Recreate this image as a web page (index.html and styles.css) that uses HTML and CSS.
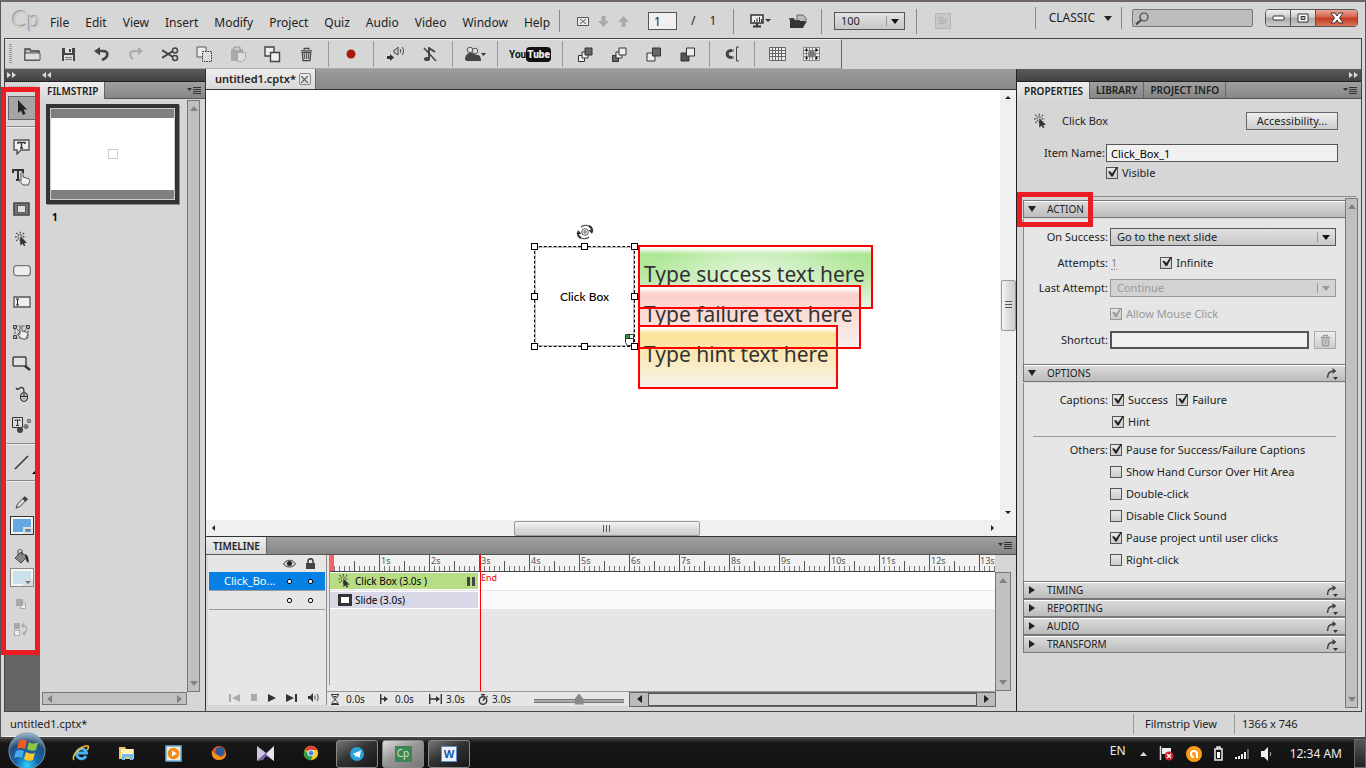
FILE: index.html
```html
<!DOCTYPE html>
<html lang="en">
<head>
<meta charset="utf-8">
<title>untitled1.cptx* - Captivate</title>
<link rel="stylesheet" href="styles.css">
</head>
<body>
<svg class="defs" aria-hidden="true">
  <symbol id="clickbox" viewBox="0 0 16 18"><path d="M6 0v4M6 9v3M0 6h4M8.500 6H12M1.500 1.500l3 3M10.500 1.500l-3 3M1.500 10.500l3-3" stroke="#444" stroke-width="1.400" fill="none" stroke-dasharray="2 1"/><path d="M6 5v11l2.600-2.400 1.600 3 1.700-1-1.600-2.700h3.400z" fill="#333"/></symbol>
  <symbol id="flyout" viewBox="0 0 14 9"><path d="M0 2h5L2.500 5z" fill="#333"/><path d="M6 1.500h8M6 3.500h8M6 5.500h8M6 7.500h8" stroke="#333"/></symbol>
  <symbol id="reset" viewBox="0 0 13 13"><path d="M1.500 11C1.500 6 4 4 8 4" fill="none" stroke="#444" stroke-width="1.600"/><path d="M6.500 1l4 3-4 3z" fill="#444"/><path d="M7 10h5l-2.500 3z" fill="#333"/></symbol>
  <symbol id="trash" viewBox="0 0 14 16"><path d="M4.500 3V1.500h5V3M1 4h12M2.500 6h9l-.8 8.500H3.300z" fill="none" stroke="currentColor" stroke-width="1.400"/><path d="M5 7v6M7 7v6M9 7v6" stroke="currentColor"/></symbol>
</svg>
<div class="app">
  <header class="topbar">
    <div class="logo">Cp</div>
    <nav class="menu"><a href="#">File</a><a href="#">Edit</a><a href="#">View</a><a href="#">Insert</a><a href="#">Modify</a><a href="#">Project</a><a href="#">Quiz</a><a href="#">Audio</a><a href="#">Video</a><a href="#">Window</a><a href="#">Help</a></nav>
    <div class="pager">
      <button aria-label="Mail"><svg width="12" height="9"><path d="M.5.500h11v8H.5zM3 2l6 5M9 2L3 7" fill="#eee" stroke="#555"/></svg></button>
      <button class="dim" aria-label="Next slide"><svg width="11" height="11"><path d="M3.500 0h4v5H11L5.500 11 0 5h3.500z"/></svg></button>
      <button class="dim" aria-label="Previous slide"><svg width="11" height="11"><path d="M3.500 11h4V6H11L5.500 0 0 6h3.500z"/></svg></button>
      <input class="page" value="1" aria-label="Slide number"><span>/</span><span>1</span>
    </div>
    <div class="views">
      <button aria-label="Preview"><svg width="21" height="14"><path d="M1 1h12v8H1z" fill="#eee" stroke="#333" stroke-width="1.500"/><path d="M4.500 8V6M7 8V4M9.500 8V3M11.500 8V5" stroke="#333"/><path d="M3 12.500h8M7 9v3" stroke="#333" stroke-width="2"/><path d="M15 5h6l-3 3z" fill="#333"/></svg></button>
      <button aria-label="Publish"><svg width="18" height="15"><path d="M8 1h6l3 3v5H8z" fill="#bbb" stroke="#666"/><path d="M0 4h5l1 2h5v1H1z" fill="#444"/><path d="M1 14V6h4l1 1h10l1 1-3 6z" fill="#333"/></svg></button>
    </div>
    <div class="zoom"><span class="select"><select aria-label="Zoom"><option>100</option></select></span></div>
    <button class="bridge" disabled>Br</button>
    <div class="workspace-switch"><button>CLASSIC <i class="tri"></i></button></div>
    <label class="search"><svg width="14" height="13"><circle cx="9" cy="5" r="4" fill="none" stroke="#444" stroke-width="1.200"/><path d="M6 8l-5 4.500" stroke="#444" stroke-width="2"/></svg><input type="search" aria-label="Search"></label>
    <div class="window-buttons">
      <button aria-label="Minimize"><svg width="13" height="6"><rect x="1" y="1" width="11" height="4" rx="1" fill="#fff" stroke="#333"/></svg></button><button aria-label="Restore"><svg width="12" height="10"><path d="M1 1h10v8H1z" fill="#fff" stroke="#333"/><path d="M4 3.500h4v3H4z" fill="#bbb" stroke="#333"/></svg></button><button class="close" aria-label="Close"><svg width="14" height="12"><path d="M1 1h4l2 3 2-3h4L9.500 6 13 11H9L7 8l-2 3H1l3.500-5z" fill="#fff" stroke="#433"/></svg></button>
    </div>
  </header>

  <div class="frame">
    <div class="toolbar">
      <span class="grip"></span>
      <button class="first" aria-label="Open"><svg width="17" height="14"><path d="M1 13V2h5l1 2h8v9z" fill="#bbb" stroke="#444" stroke-width="1.400"/><path d="M1 6h15v7H1z" fill="#ddd" stroke="#555"/></svg></button>
      <button aria-label="Save"><svg width="15" height="15"><path d="M1 1h13v13H1z" fill="#444"/><path d="M4 1h7v5H4z" fill="#ddd"/><path d="M8 2h2v3H8z" fill="#444"/><path d="M3 8h9v6H3z" fill="#ddd"/><path d="M4 10.500h7M4 12.500h7" stroke="#777"/></svg></button>
      <button aria-label="Undo"><svg width="16" height="14"><path d="M3 4h6c6 0 6 6-1 9" fill="none" stroke="#444" stroke-width="2.600"/><path d="M6 0v8.500L0 4z" fill="#444"/></svg></button>
      <button class="dim" aria-label="Redo"><svg width="16" height="14"><path d="M12 4H7C1 4 1 9 5 12" fill="none" stroke="#aaa" stroke-width="2"/><path d="M10 0v8l5-4z"/></svg></button>
      <button aria-label="Cut"><svg width="17" height="15"><path d="M0 3l11 7M0 11l11-7" stroke="#444" stroke-width="2"/><circle cx="13" cy="3.500" r="2.500" fill="none" stroke="#444" stroke-width="1.500"/><circle cx="13" cy="11" r="2.500" fill="none" stroke="#444" stroke-width="1.500"/></svg></button>
      <button aria-label="Copy"><svg width="17" height="17"><path d="M1 1h9v10H1z" fill="#eee" stroke="#555"/><path d="M6.500 5.500h9v10h-9z" fill="#ddd" stroke="#333" stroke-dasharray="1.500 1"/></svg></button>
      <button aria-label="Paste"><svg width="17" height="17"><path d="M1 3h12v12H1z" fill="#aaa"/><path d="M4 1h6v4H4z" fill="#ccc" stroke="#999"/><path d="M7.500 6.500h8v6l-3 3h-5z" fill="#ddd" stroke="#aaa"/></svg></button>
      <button aria-label="Duplicate"><svg width="17" height="17"><path d="M1 1h9v9H1z" fill="#eee" stroke="#444" stroke-width="1.400"/><path d="M6.500 6.500h9v9h-9z" fill="#eee" stroke="#444" stroke-width="1.400"/></svg></button>
      <button class="grey" aria-label="Delete"><svg width="13" height="15"><use href="#trash"/></svg></button>
      <span class="sep"></span>
      <button aria-label="Record"><svg width="10" height="10"><circle cx="5" cy="5" r="4.500" fill="#a81a0c"/></svg></button>
      <span class="sep"></span>
      <button aria-label="Audio"><svg width="18" height="16"><path d="M0 10h3V8l4 3.500L3 15v-2H0z" fill="#333"/><path d="M7 4h1l3-3v8L8 7H7z" fill="#ccc" stroke="#444"/><path d="M13 3c1 1 1 3 0 4M15 1c2 2 2 6 0 8" fill="none" stroke="#444"/></svg></button>
      <button aria-label="Mute music"><svg width="15" height="15"><path d="M6 12V1l6 4" fill="none" stroke="#444" stroke-width="2"/><ellipse cx="4" cy="12" rx="3" ry="2" fill="#444"/><path d="M1 1l12 13" stroke="#444" stroke-width="1.500"/></svg></button>
      <span class="sep"></span>
      <button aria-label="Share"><svg width="22" height="16"><path d="M1 14c0-4 2-7 5-7 4 0 5 2 8 2 2 0 3 3 3 6H3z" fill="#444"/><circle cx="6" cy="4" r="2.800" fill="#ddd" stroke="#555"/><circle cx="11" cy="5" r="2.800" fill="#ddd" stroke="#555"/><path d="M17 7h5l-2.500 3z" fill="#333"/></svg></button>
      <span class="sep"></span>
      <button class="youtube" aria-label="YouTube"><span>You</span><b>Tube</b></button>
      <span class="sep"></span>
      <button aria-label="Bring to front"><svg width="15" height="15"><path d="M.5 8.500h6v6h-6z" fill="#eee" stroke="#333"/><path d="M4 5h6v6H4z" fill="#eee" stroke="#333"/><path d="M7 1h7v7H7z" fill="#666" stroke="#333"/></svg></button>
      <button aria-label="Bring forward"><svg width="15" height="15"><path d="M.5 8.500h6v6h-6z" fill="#666" stroke="#333"/><path d="M4 5h6v6H4z" fill="#eee" stroke="#333"/><path d="M7 1h7v7H7z" fill="#eee" stroke="#333"/></svg></button>
      <button aria-label="Send backward"><svg width="15" height="15"><path d="M1 6h8v8H1z" fill="#eee" stroke="#333"/><path d="M6.500 1h8v8h-8z" fill="#666" stroke="#333"/></svg></button>
      <button aria-label="Send to back"><svg width="15" height="15"><path d="M1 6h8v8H1z" fill="#555" stroke="#333"/><path d="M6.500 1h8v8h-8z" fill="#eee" stroke="#333"/></svg></button>
      <span class="sep"></span>
      <button aria-label="Snap"><svg width="15" height="16"><path d="M9 4.500H6C1 5 1 11 6 11.500h3" fill="none" stroke="#444" stroke-width="3"/><path d="M8 3v3M8 10v3" stroke="#ddd"/><path d="M14 1h-2.500v14H14" fill="none" stroke="#444"/></svg></button>
      <span class="sep"></span>
      <button aria-label="Show grid"><svg width="17" height="14"><path d="M.5.500h16v13H.5zM3.500 0v14M6.500 0v14M9.500 0v14M12.500 0v14M0 3.500h17M0 6.500h17M0 9.500h17" fill="#eee" stroke="#666"/></svg></button>
      <button aria-label="Snap to grid"><svg width="17" height="14"><path d="M.5.500h16v13H.5zM3.500 0v14M6.500 0v14M9.500 0v14M12.500 0v14M0 3.500h17M0 6.500h17M0 9.500h17" fill="#eee" stroke="#888"/><circle cx="8.500" cy="7" r="3.500" fill="#777"/><path d="M2 3h3M3.500 1.500v3M12 3h3M13.500 1.500v3M2 11h3M3.500 9.500v3M12 11h3M13.500 9.500v3" stroke="#111"/></svg></button>
    </div>

    <div class="main">
      <aside class="tools">
        <div class="dock"><svg width="9" height="6"><path d="M0 0l4 3-4 3zM5 0l4 3-4 3z"/></svg></div>
        <div class="tool-list">
          <span class="dots"></span>
          <button class="selected" aria-label="Selection"><svg width="10" height="16"><path d="M1 0v13l3-2.500L6 15l2.500-1.200L6.500 9.500H10z" fill="#222"/></svg></button>
          <hr>
          <button aria-label="Text caption"><svg width="17" height="16"><path d="M1 1h15v10H8l-4 4v-4H1z" fill="#eee" stroke="#555" stroke-width="1.400"/><path d="M5 5V3.500h7V5M8.500 3.500V9M7 9h3" fill="none" stroke="#333" stroke-width="1.400"/></svg></button>
          <button aria-label="Rollover caption"><svg width="19" height="17"><path d="M1 4V1h10v3M6 1v10M4 11h4" fill="none" stroke="#333" stroke-width="2"/><path d="M9 12V4.500c0-1.500 2-1.500 2 0V8l5 1.500c2 .5 2 1.500 1.500 3L16.500 16H11L7 11.500c-.5-1 1-1.500 2 .5z" fill="#eee" stroke="#555"/></svg></button>
          <button aria-label="Highlight box"><svg width="17" height="14"><path d="M1 1h15v12H1z" fill="#777" stroke="#444" stroke-width="1.500"/><path d="M4.500 3.500h8v7h-8z" fill="#ddd" stroke="#111" stroke-dasharray="1 1"/></svg></button>
          <button aria-label="Click box"><svg width="14" height="17"><use href="#clickbox"/></svg></button>
          <button aria-label="Button"><svg width="18" height="12"><rect x=".7" y=".7" width="16.600" height="10" rx="3" fill="#eee" stroke="#777" stroke-width="1.300"/></svg></button>
          <button aria-label="Text entry box"><svg width="18" height="12"><path d="M1 1h16v10H1z" fill="#eee" stroke="#555" stroke-width="1.300"/><path d="M3 3h3M4.500 3v6M3 9h3" stroke="#222"/></svg></button>
          <button aria-label="Rollover slidelet"><svg width="18" height="17"><path d="M2 2h13v12H2z" fill="none" stroke="#555" stroke-dasharray="2.500 1"/><path d="M.5 1.500h3v3h-3zM13.500 1.500h3v3h-3zM.5 11.500h3v3h-3z" fill="#aaa" stroke="#444"/><path d="M4 5l3 3M13 5l-3 3M4 11l3-3" stroke="#666"/><path d="M7 10V4c0-1.500 2-1.500 2 0v3l4 1c2 .5 2 1.500 1.500 3L13 15H9l-4-4c-.500-1 1-1.500 2-.500z" fill="#eee" stroke="#555"/></svg></button>
          <button aria-label="Zoom area"><svg width="19" height="15"><rect x="1" y="1" width="13" height="9" rx="1" fill="#e2e2e2" stroke="#444" stroke-width="1.500"/><path d="M13 10l5 4" stroke="#333" stroke-width="2.500"/></svg></button>
          <button aria-label="Mouse"><svg width="14" height="17"><path d="M1 2c3 4 4-3 7 0 1 1 1 3 1 4" fill="none" stroke="#333" stroke-width="1.300"/><rect x="5.500" y="6.500" width="7" height="9" rx="3.500" fill="#bbb" stroke="#333"/><path d="M5 10.500h8M9 7v3" stroke="#333"/></svg></button>
          <button aria-label="Text animation"><svg width="20" height="17"><path d="M.5.500h10v10H.5z" fill="#ddd" stroke="#333"/><path d="M3 4V3h5v1M5.500 3v5.500M4 8.500h3" fill="none" stroke="#333"/><circle cx="8" cy="13" r="3" fill="#444"/><circle cx="14" cy="9.500" r="2.500" fill="#777"/><path d="M15.500 2.500h3v3h-3z" fill="#999" stroke="#777"/></svg></button>
          <hr class="tight">
          <button class="line" aria-label="Line"><svg width="15" height="15"><path d="M1 14L14 1" stroke="#333" stroke-width="1.500"/></svg><svg class="more" width="4" height="4"><path d="M4 0v4H0z"/></svg></button>
          <hr class="tight">
          <button class="pencil" aria-label="Stroke colour"><svg width="13" height="13"><path d="M1 12l1.500-4L8 2.500l2.500 2.500L5 10.500z" fill="#ddd" stroke="#444"/><path d="M8 2.500L10 .7l2.500 2.500-2 2z" fill="#444" stroke="#333"/></svg></button>
          <button class="swatch" aria-label="Stroke swatch"><i class="tri"></i></button>
          <button class="bucket" aria-label="Fill colour"><svg width="15" height="15"><path d="M1 9l6-6 6 5-6 6z" fill="#888" stroke="#444"/><path d="M4 7V1.500C5-.5 8 0 8 2v4" fill="none" stroke="#444"/><path d="M11 5c3 1 4 5 3.500 9l-2-2z" fill="#222"/></svg></button>
          <button class="swatch pale" aria-label="Fill swatch"><i class="tri"></i></button>
          <button class="small" disabled aria-label="Default colours"><svg width="11" height="11"><path d="M4.500 4.500h5v5h-5z" fill="#eee" stroke="#aaa"/><path d="M0 0h7v7H0z" fill="#a8a8a8"/></svg></button>
          <button class="small" disabled aria-label="Swap colours"><svg width="15" height="13"><path d="M0 0h6v6H0z" fill="#a8a8a8"/><path d="M.5 7.500h5v5h-5z" fill="#eee" stroke="#aaa"/><path d="M8 2.500c6-1 6 8 1 8M10 .5l-2 2 2 2M11 8.500l-2 2 2 2" fill="none" stroke="#aaa" stroke-width="1.400"/></svg></button>
        </div>
      </aside>

      <aside class="filmstrip">
        <div class="dock"><svg width="9" height="6"><path d="M4 0L0 3l4 3zM9 0L5 3l4 3z"/></svg></div>
        <div class="tabs"><button class="on">FILMSTRIP</button><span class="fly"><svg width="14" height="9"><use href="#flyout"/></svg></span></div>
        <div class="film-body">
          <div class="slides"><div class="thumb"><div class="thumb-page"><i></i></div></div><b>1</b></div>
          <div class="vbar"><i class="tri up"></i><i class="tri"></i></div>
          <div class="hbar"><i class="tri left"></i><i class="tri right"></i></div>
        </div>
      </aside>

      <section class="center">
        <div class="doc-tabs"><div class="doc-tab"><b>untitled1.cptx*</b><button aria-label="Close document"><svg width="7" height="7"><path d="M0 0l7 7M7 0L0 7" stroke="#555" stroke-width="1.200"/></svg></button></div></div>
        <div class="editor">
          <div class="stage">
            <svg class="rotate" width="18" height="16"><path d="M5 3c2-2 6-2 8-1M13 13c-2 2-6 2-8 1" fill="none" stroke="#555" stroke-width="1.300"/><path d="M13 2c2 1 3 3 3 4M5 14c-2-1-3-3-3-4" fill="none" stroke="#333" stroke-width="2"/><path d="M12.500 6h5L16 10zM5.500 10h-5L2 6z" fill="#333"/><circle cx="9" cy="8" r="3.300" fill="#fff" stroke="#555"/><circle cx="9" cy="8" r="1.200" fill="none" stroke="#555"/></svg>
            <div class="click-box"><span>Click Box</span>
              <i class="h nw"></i><i class="h n"></i><i class="h ne"></i><i class="h w"></i><i class="h e"></i><i class="h sw"></i><i class="h s"></i><i class="h se"></i>
              <svg class="mouse" width="9" height="12"><path d="M.5.500h8v8l-2 3h-4l-2-3z" fill="#fff" stroke="#333"/><path d="M1 1h3v3H1z" fill="#2c9a3a"/><path d="M0 4.500h9M4.500 0v4" stroke="#333"/></svg>
            </div>
            <div class="caption success">Type success text here</div>
            <div class="caption failure">Type failure text here</div>
            <div class="caption hint">Type hint text here</div>
          </div>
          <div class="win-v"><i class="tri up"></i><span class="thumb-v"></span><i class="tri"></i></div>
          <div class="win-h"><i class="tri left"></i><span class="thumb-h"></span><i class="tri right"></i></div>
        </div>
        <div class="timeline">
          <div class="tabs"><button class="on">TIMELINE</button><span class="fly"><svg width="14" height="9"><use href="#flyout"/></svg></span></div>
          <div class="tl-body">
            <div class="layers">
              <div class="layer head"><svg width="13" height="9"><path d="M.5 5C3 0 10 0 12.500 5 10 9 3 9 .5 5z" fill="#ccc" stroke="#444"/><circle cx="6.500" cy="4.500" r="2.500" fill="#222"/></svg><svg width="9" height="11"><path d="M2 5V3c0-3 5-3 5 0v2" fill="none" stroke="#333" stroke-width="1.400"/><path d="M0 5h9v6H0z" fill="#444"/></svg></div>
              <div class="layer active"><span>Click_Bo...</span><i></i><i></i></div>
              <div class="layer"><i></i><i></i></div>
              <div class="play">
                <button class="dim" aria-label="First"><svg width="11" height="8"><path d="M0 0h2v8H0zM11 0v8L3 4z"/></svg></button>
                <button class="dim" aria-label="Stop"><svg width="6" height="7"><path d="M0 0h6v7H0z"/></svg></button>
                <button aria-label="Play"><svg width="8" height="8"><path d="M0 0l8 4-8 4z"/></svg></button>
                <button aria-label="Last"><svg width="11" height="8"><path d="M0 0l8 4-8 4zM9 0h2v8H9z"/></svg></button>
                <button aria-label="Sound"><svg width="11" height="9"><path d="M0 3h2l3-3v9L2 6H0z"/><path d="M7 2.500v4M9 1c1.500 2 1.500 5 0 7" fill="none" stroke="#444"/></svg></button>
              </div>
            </div>
            <div class="tracks">
              <div class="ruler"><span></span><span>1s</span><span>2s</span><span>3s</span><span>4s</span><span>5s</span><span>6s</span><span>7s</span><span>8s</span><span>9s</span><span>10s</span><span>11s</span><span>12s</span><span class="last">13s</span></div>
              <div class="track"><div class="clip green"><svg width="13" height="15"><use href="#clickbox"/></svg><span>Click Box (3.0s )</span><em></em></div><small>End</small></div>
              <div class="track second"><div class="clip lilac"><svg width="14" height="12"><path d="M1.500 1.500h11v9h-11z" fill="#fff" stroke="#333" stroke-width="3"/></svg><span>Slide (3.0s)</span></div></div>
              <div class="line-start"></div><div class="line-end"></div>
            </div>
            <div class="vbar"><i class="tri up"></i><i class="tri"></i></div>
            <div class="tl-foot">
              <span><svg width="8" height="11"><path d="M0 .5h8M0 10.500h8M1 1c0 4 6 5 6 9M7 1c0 4-6 5-6 9" fill="none" stroke="#333"/><path d="M2 9h4v1H2zM2 2h4L4 4z" fill="#333"/></svg>0.0s</span>
              <span><svg width="8" height="10"><path d="M.7 0v10M1 5h4" stroke="#333" stroke-width="1.400"/><path d="M4 2l4 3-4 3z"/></svg>0.0s</span>
              <span class="wide"><svg width="13" height="10"><path d="M.7 0v10M12.300 0v10M1 5h8" stroke="#333" stroke-width="1.400"/><path d="M7 2l4 3-4 3z"/></svg>3.0s</span>
              <span class="wide"><svg width="10" height="11"><circle cx="5" cy="6.500" r="3.800" fill="#ddd" stroke="#333" stroke-width="1.400"/><path d="M3 .7h4M5 1v2M8.500 2l1 1M5 6.500L7 4" stroke="#333" stroke-width="1.300"/></svg>3.0s</span>
              <input type="range" min="0" max="100" value="50" aria-label="Timeline zoom">
              <div class="tl-scroll"><button aria-label="Scroll left"><i class="tri left"></i></button><span></span><button aria-label="Scroll right"><i class="tri right"></i></button></div>
            </div>
          </div>
        </div>
      </section>

      <aside class="props">
        <div class="dock end"><svg width="9" height="6"><path d="M0 0l4 3-4 3zM5 0l4 3-4 3z"/></svg></div>
        <div class="tabs"><button class="on">PROPERTIES</button><button>LIBRARY</button><button>PROJECT INFO</button><span class="fly"><svg width="14" height="9"><use href="#flyout"/></svg></span></div>
        <div class="item">
          <div class="item-top"><svg width="14" height="17"><use href="#clickbox"/></svg><span>Click Box</span><button class="btn">Accessibility...</button></div>
          <div class="item-name"><label for="nm">Item Name:</label><input id="nm" value="Click_Box_1"></div>
          <label class="check vis"><input type="checkbox" checked>Visible</label>
        </div>
        <div class="groups">
          <div class="acc">
            <div class="acc-head"><i class="tri"></i><span>ACTION</span><div class="mark"></div></div>
            <div class="acc-body action">
              <label for="os">On Success:</label><span class="select"><select id="os"><option>Go to the next slide</option></select></span>
              <span class="lab">Attempts:</span><div class="row"><a class="num" href="#">1</a><label class="check"><input type="checkbox" checked>Infinite</label></div>
              <label for="la">Last Attempt:</label><span class="select off"><select id="la" disabled><option>Continue</option></select></span>
              <span></span><label class="check off"><input type="checkbox" checked disabled>Allow Mouse Click</label>
              <label for="sc">Shortcut:</label><div class="row sc"><input id="sc"><button class="btn" disabled aria-label="Clear shortcut"><svg width="11" height="13"><use href="#trash"/></svg></button></div>
            </div>
            <div class="acc-head"><i class="tri"></i><span>OPTIONS</span><svg width="13" height="13"><use href="#reset"/></svg></div>
            <div class="acc-body options">
              <span class="lab">Captions:</span><div class="row caps"><label class="check"><input type="checkbox" checked>Success</label><label class="check"><input type="checkbox" checked>Failure</label></div>
              <span></span><div class="row caps"><label class="check"><input type="checkbox" checked>Hint</label></div>
              <hr>
              <span class="lab">Others:</span><label class="check"><input type="checkbox" checked>Pause for Success/Failure Captions</label>
              <span></span><label class="check"><input type="checkbox">Show Hand Cursor Over Hit Area</label>
              <span></span><label class="check"><input type="checkbox">Double-click</label>
              <span></span><label class="check"><input type="checkbox">Disable Click Sound</label>
              <span></span><label class="check"><input type="checkbox" checked>Pause project until user clicks</label>
              <span></span><label class="check"><input type="checkbox">Right-click</label>
            </div>
            <div class="acc-head shut"><i class="tri right"></i><span>TIMING</span><svg width="13" height="13"><use href="#reset"/></svg></div>
            <div class="acc-head shut"><i class="tri right"></i><span>REPORTING</span><svg width="13" height="13"><use href="#reset"/></svg></div>
            <div class="acc-head shut"><i class="tri right"></i><span>AUDIO</span><svg width="13" height="13"><use href="#reset"/></svg></div>
            <div class="acc-head shut"><i class="tri right"></i><span>TRANSFORM</span><svg width="13" height="13"><use href="#reset"/></svg></div>
          </div>
          <div class="vbar"><i class="tri up"></i><i class="tri"></i></div>
        </div>
      </aside>
    </div>
  </div>
  <footer class="status"><span>untitled1.cptx*</span><span class="cell view">Filmstrip View</span><span class="cell size">1366 x 746</span></footer>
</div>

<div class="taskbar">
  <button class="orb" aria-label="Start"><svg width="38" height="36" viewBox="0 0 38 36"><defs><radialGradient id="orb" cx=".5" cy=".9" r=".9"><stop offset="0" stop-color="#2fd0ff"/><stop offset=".35" stop-color="#1467ad"/><stop offset=".7" stop-color="#25507c"/><stop offset="1" stop-color="#a5bccb"/></radialGradient></defs><circle cx="19" cy="19" r="18" fill="url(#orb)" stroke="#7f99aa"/><path d="M11 9q4-3 8 0l-2 8q-4-2-8 0z" fill="#ee5a24"/><path d="M21 10q4 3 9 0l-2 8q-5 2-9-1z" fill="#8cc63f"/><path d="M8 19q4-2 8 0l-2 7q-4-2-8 0z" fill="#4aa9ea"/><path d="M18 20q5 3 9 1l-2 7q-5 2-9-1z" fill="#ffc72c"/></svg></button>
  <button aria-label="Internet Explorer"><svg width="18" height="18"><path d="M14 12A5 5 0 1 1 14.500 9H5" fill="none" stroke="#4db4f2" stroke-width="3"/><path d="M2 16C-1 12 9 1 16 2c1 1 0 3-1 4" fill="none" stroke="#f6bf2c" stroke-width="1.500"/></svg></button>
  <button aria-label="Explorer"><svg width="17" height="16"><path d="M0 2h6l1 2h8v10H0z" fill="#e8c76a"/><path d="M2 4h12v8H2z" fill="#fff0b5"/><path d="M3 15V9h11v6h-3v-3H6v3z" fill="#71bdeb"/></svg></button>
  <button aria-label="Media player"><svg width="17" height="17"><path d="M1 1h15v15H1z" fill="#f7e9d2" stroke="#65aee0" stroke-width="1.500"/><circle cx="8.500" cy="8.500" r="5.800" fill="#f18a17"/><path d="M7 5.500l5 3-5 3z" fill="#fff"/></svg></button>
  <button aria-label="Firefox"><svg width="16" height="16"><circle cx="8" cy="8" r="7" fill="#e2581c"/><circle cx="9" cy="6.500" r="4.500" fill="#275a9b"/><path d="M1 5c2 5 5 4 8 7 3 1 5-2 6-5 1 5-3 8-7 8C2 15 0 10 1 5z" fill="#f7941d"/></svg></button>
  <button aria-label="KMPlayer"><svg width="17" height="15"><path d="M0 0l9 7-9 8z" fill="#cfc4e4"/><path d="M17 0L0 15l6-1 3-4 8 5z" fill="#8166ae"/><path d="M17 0v15L9 8z" fill="#e8e4ef"/></svg></button>
  <button aria-label="Chrome"><svg width="16" height="16"><circle cx="8" cy="8" r="7.200" fill="#f7ca2c"/><path d="M8 8L1.800 4.400A7.200 7.200 0 0 1 14.500 5H8z" fill="#dd4435"/><path d="M8 15.200A7.200 7.200 0 0 1 1.800 4.400L5 9.500 9.500 11z" fill="#2f9e4d"/><circle cx="8" cy="8" r="3.300" fill="#fff"/><circle cx="8" cy="8" r="2.500" fill="#4486dd"/></svg></button>
  <button class="run" aria-label="Telegram"><svg width="14" height="14"><circle cx="7" cy="7" r="7" fill="#2ba0da"/><path d="M2.500 7L11 3.500 9.500 11 6.500 9 5.500 10.500 5 8z" fill="#fff"/></svg></button>
  <button class="run current" aria-label="Captivate"><span class="cp">Cp</span></button>
  <button class="run" aria-label="Word"><span class="word">W</span></button>
  <div class="tray">
    <span class="lang">EN</span>
    <svg width="7" height="4"><path d="M0 4l3.500-4L7 4z" fill="#ddd"/></svg>
    <svg width="15" height="15"><path d="M1.500 0v14" stroke="#ddd" stroke-width="1.500"/><path d="M3 2h9v6H3z" fill="#eee"/><circle cx="10" cy="10" r="4.500" fill="#c9252b"/><path d="M8 8l4 4M12 8l-4 4" stroke="#fff" stroke-width="1.400"/></svg>
    <svg width="16" height="16"><circle cx="8" cy="8" r="8" fill="#fb9a16"/><path d="M11 12V8A3 3 0 1 0 8 11" fill="none" stroke="#fff" stroke-width="2"/></svg>
    <svg width="9" height="15"><path d="M1 3h7v11H1zM3 1h3v2H3z" fill="#111" stroke="#eee" stroke-width="1.500"/><path d="M3 6h3v6H3z" fill="#fff"/></svg>
    <svg width="14" height="10"><path d="M0 8h2v2H0zM3 7h2v3H3zM6 5h2v5H6zM9 3h2v7H9z" fill="#eee"/><path d="M12 0h2v10h-2z" fill="#666"/></svg>
    <svg width="12" height="14"><path d="M0 4h3l4-4v14l-4-4H0z" fill="#eee"/><path d="M9 5c1 1 1 3 0 4" fill="none" stroke="#aaa"/></svg>
    <time>12:34 AM</time>
    <button class="desktop" aria-label="Show desktop"></button>
  </div>
</div>
<div class="mark-tools"></div>
</body>
</html>
```

FILE: styles.css
```css
*{box-sizing:border-box}
body{margin:0;min-height:100vh;display:flex;flex-direction:column;position:relative;background:#111;color:#222;font:11px/14px "Noto Sans","Open Sans",sans-serif}
button,input,select{font:inherit;color:inherit;margin:0;padding:0;border:0;background:none;border-radius:0;min-width:0}
button{display:flex;align-items:center;justify-content:center}
a{color:inherit;text-decoration:none}
svg{display:block;flex:none}
.defs{position:absolute;width:0;height:0}
.dim svg{fill:#aaa}
.tri{width:0;height:0;flex:none;border:4px solid transparent;border-top:5px solid #222;border-bottom:0}
.tri.up{border:4px solid transparent;border-bottom:5px solid #222;border-top:0}
.tri.left{border:4px solid transparent;border-right:5px solid #222;border-left:0}
.tri.right{border:4px solid transparent;border-left:5px solid #222;border-right:0}

/* Title and menu bar */
.app{flex:1;display:flex;flex-direction:column;background:#d6d6d6;border-top:2px solid #6d6567;border-left:1px solid #555;border-right:1px solid #555;border-bottom:2px solid #444;padding:0 3px}
.topbar{height:36px;display:flex;align-items:center;font-size:12px;padding:2px 4px 0 8px}
.logo{width:38px;font:23px/26px Lato,sans-serif;color:#c9c9c9;text-shadow:-1px -1px #999;padding-bottom:4px}
.menu{width:509px;display:flex;gap:16px;padding-top:4px}
.pager{display:flex;align-items:center;border-left:1px solid #888;height:22px;padding-left:17px;gap:9px;width:174px}
.pager button,.pager input{flex:none}
.pager input{margin-left:10px;width:29px;height:18px;border:1px solid #555;background:#f0f0f0;padding-left:5px}
.pager span{padding-left:5px}
.views,.zoom{display:flex;align-items:center;border-left:1px solid #888;height:25px}
.views{width:88px;padding-left:16px;gap:18px}
.zoom{width:96px;padding-left:12px;border-right:1px solid #888}
.zoom .select{width:71px;font-size:11px}
.bridge{width:16px;height:16px;margin-left:18px;border:1px solid #b5b5b5;background:#c8c8c8;color:#aaa;font-size:9px}
.workspace-switch{margin-left:auto;height:22px;display:flex;border-left:1px solid #888;border-right:1px solid #888;padding:0 9px 0 13px}
.workspace-switch button{gap:9px}
.workspace-switch,.search,.window-buttons{margin-bottom:6px}
.search{display:flex;align-items:center;width:121px;height:18px;margin-left:10px;border:1px solid #777;background:#bdbdbd;border-radius:2px;padding-left:2px}
.search input{width:100px}
.window-buttons{display:flex;margin-left:12px;border:1px solid #555;border-radius:4px;height:18px;overflow:hidden}
.window-buttons button{width:25px;border-right:1px solid #555;background:linear-gradient(#eee,#ccc 45%,#a9a9a9 50%,#ccc)}
.window-buttons .close{width:41px;border:0;background:linear-gradient(#e8a598,#d8614a 45%,#c03a20 50%,#d8755a)}

/* Toolbar */
.frame{flex:1;display:flex;flex-direction:column;border:1px solid #444}
.toolbar{height:30px;width:837px;display:flex;align-items:center;border-right:1px solid #666;border-bottom:1px solid #aaa;border-top:1px solid #eee}
.toolbar button{width:34px;height:28px}
.toolbar .first{width:37px}
.toolbar .grey{color:#444}
.grip{width:3px;height:20px;margin:0 2px 0 4px;background:repeating-linear-gradient(#999 0 1px,transparent 1px 2px)}
.sep{width:1px;height:26px;background:#999;margin:0 5px}
.toolbar .youtube{width:54px;font:bold 10px/15px Roboto,"Liberation Sans",sans-serif;color:#111}
.youtube b{background:#111;color:#eee;border-radius:4px;padding:0 1px}

/* Docked panels */
.main{flex:1;display:grid;grid-template-columns:35px 166px minmax(0,1fr) 344px}
.dock{height:13px;background:linear-gradient(#5c5c5c,#424242);border-bottom:1px solid #222;display:flex;align-items:center;padding-left:2px}
.dock svg{fill:#ddd}
.dock.end{justify-content:flex-end;padding-right:3px}
.tools{background:#646464}
.tool-list{background:#d6d6d6;height:572px;display:flex;flex-direction:column;align-items:center;padding-right:2px}
.tool-list button{width:100%;height:31px;flex:none}
.dots{width:25px;height:2px;margin:4px 0 8px;background:repeating-linear-gradient(90deg,#999 0 1px,transparent 1px 2px)}
.tool-list .selected{height:24px;width:28px;background:#a5a5a5;border:1px solid #666}
.tool-list hr{width:29px;border:0;border-top:1px solid #888;border-bottom:1px solid #eee;margin:6px 0 3px;flex:none}
.tool-list hr.tight{margin:2px 0 2px}
.tool-list .line{position:relative}
.more{position:absolute;right:2px;bottom:4px}
.tool-list .pencil{height:32px;padding-top:5px}
.tool-list .bucket{height:33px;padding-top:9px}
.tool-list .swatch{width:24px;height:19px;border:1px solid #333;background:#64a8e2;box-shadow:inset 0 0 0 2px #f4f4f4;align-items:flex-end;justify-content:flex-end;padding:2px}
.swatch .tri{border-top-color:#777;border-width:3px 3px 0;outline:2px solid #ddd}
.tool-list .swatch.pale{background:#c9e1ea;border-color:#888;margin-bottom:5px}
.tool-list .small{height:25px}

.filmstrip{display:flex;flex-direction:column;border-right:1px solid #333}
.tabs{display:flex;height:17px;background:linear-gradient(#a0a0a0,#868686);border-bottom:1px solid #555;font-weight:600;font-size:10px}
.tabs button{padding:0 6px;border-right:1px solid #666;font-weight:600}
.tabs .on{background:linear-gradient(#eee,#d8d8d8);height:17px;padding:0 6px 0 7px}
.fly{margin:4px 4px 0 auto}
.film-body{flex:1;display:grid;grid-template:1fr 13px/145px 13px;padding:1px 0 6px 2px;background:#d6d6d6}
.slides{padding:4px 0 0 4px}
.slides b{display:block;padding:6px;font-size:10px;color:#000}
.thumb{width:133px;height:100px;background:#808080;border:4px solid #333;box-shadow:inset 0 0 0 1px #ccc,1px 1px #888;padding:10px 1px}
.thumb-page{height:100%;background:#fff;display:flex;align-items:center;justify-content:center}
.thumb-page i{width:10px;height:10px;border:1px solid #ccc}
.vbar,.hbar{background:#c0c0c0;border:1px solid #777;display:flex;align-items:center;justify-content:space-between}
.vbar{flex-direction:column;padding:5px 0}
.hbar{padding:0 4px}
.vbar .tri,.hbar .tri{opacity:.4}

/* Document */
.center{display:flex;flex-direction:column;min-width:0;border-right:1px solid #222}
.doc-tabs{height:21px;background:linear-gradient(#9c9c9c,#888);border-bottom:1px solid #333;display:flex}
.doc-tab{background:linear-gradient(#eee,#d8d8d8);display:flex;align-items:center;padding:0 4px 0 9px;gap:3px;border-right:1px solid #666}
.doc-tab b{font-weight:600}
.doc-tab button{width:12px;height:12px;border:1px solid #888;border-radius:2px}
.editor{flex:1;display:grid;grid-template:1fr 16px/1fr 16px;background:#f0f0f0}
.stage{position:relative;overflow:hidden;background:#fff}
.rotate{position:absolute;left:370px;top:134px}
.click-box{position:absolute;left:328px;top:156px;width:101px;height:101px;border:1px dashed #000;outline:1px solid #bbb;outline-offset:-2px;display:flex;align-items:center;justify-content:center;color:#000;font:500 12px/14px Lato,sans-serif}
.h{position:absolute;width:7px;height:7px;background:#fff;border:1px solid #000;z-index:3}
.nw,.n,.ne{top:-4px}.w,.e{top:46px}.sw,.s,.se{bottom:-4px}
.nw,.w,.sw{left:-4px}.n,.s{left:46px}.ne,.e,.se{right:-4px}
.mouse{position:absolute;right:0;bottom:0}
.caption{position:absolute;left:432px;height:64px;padding:15px 0 0 6px;font:21px/28px "Noto Sans",sans-serif;color:#333;white-space:nowrap;border-radius:5px}
.caption::after{content:"";position:absolute;inset:0;border:2px solid red;z-index:2}
.success{top:155px;width:235px;background:linear-gradient(#fff 3px,transparent 9px),radial-gradient(ellipse 45% 100% at 50% 60%,#e6f6e0,transparent),linear-gradient(#a9e68e,#b9e9a6 50%,#eef5ec)}
.failure{top:195px;width:223px;background:linear-gradient(#fff 3px,transparent 9px),linear-gradient(#fbccc4,#fbdcd6 50%,#f6f2f1)}
.hint{top:235px;width:200px;background:linear-gradient(#fff 3px,transparent 9px),linear-gradient(#fde089,#fae9b8 50%,#f4f2ee)}
.win-v,.win-h{display:flex;align-items:center;justify-content:space-between}
.win-v{flex-direction:column;padding:6px 0}
.win-h{padding:0 6px}
.win-v .tri{border-width:3px 3px 0}.win-v .tri.up{border-width:0 3px 3px}
.win-h .tri.left{border-width:3px 3px 3px 0}.win-h .tri.right{border-width:3px 0 3px 3px}
.thumb-v,.thumb-h{border:1px solid #999;border-radius:2px;display:flex;justify-content:center;align-items:center}
.thumb-v{width:15px;height:51px;background:linear-gradient(90deg,#f5f5f5,#ddd 50%,#ccc)}
.thumb-v::after{content:"";width:7px;height:8px;background:repeating-linear-gradient(#555 0 1px,transparent 1px 3px)}
.thumb-h{width:186px;height:15px;margin-left:8px;background:linear-gradient(#f5f5f5,#ddd 50%,#ccc)}
.thumb-h::after{content:"";width:8px;height:7px;background:repeating-linear-gradient(90deg,#555 0 1px,transparent 1px 3px)}

/* Timeline */
.timeline{border-top:1px solid #333;background:#d6d6d6}
.timeline .tabs{height:18px}
.tl-body{display:grid;grid-template:17px 119px 14px/119px minmax(0,1fr) 16px;height:156px;padding:0 5px 6px 2px}
.layers{grid-row:1/4;background:#e6e6e6;border-right:1px solid #888;padding:0 1px;display:flex;flex-direction:column}
.layer{height:19px;display:flex;align-items:center;justify-content:flex-end;gap:10px;padding-right:12px;border-bottom:1px solid #999}
.layer.head{height:17px;padding-right:10px;border:0}
.layer.active{background:#0680e4;color:#fff}
.layer span{margin-right:auto;padding-left:15px}
.layer i{width:5px;height:5px;flex:none;border:1px solid #000;border-radius:2px;background:#fff}
.layer i+i{margin-left:6px}
.play{margin-top:auto;height:15px;padding:0 6px 0 20px;display:flex;align-items:center;justify-content:space-between;fill:#333}
.tracks{grid-row:1/3;position:relative;background:#e6e6e6;overflow:hidden;padding-left:2px}
.ruler{height:17px;display:flex;border-bottom:1px solid #444;font-size:9px;line-height:12px;color:#555;background:repeating-linear-gradient(90deg,#555 0 1px,transparent 1px 50px),repeating-linear-gradient(90deg,#555 0 1px,transparent 1px 25px) 0 6px,repeating-linear-gradient(90deg,#777 0 1px,transparent 1px 5px) 0 11px,#f2f2f2;background-repeat:no-repeat}
.ruler span{flex:0 0 50px;padding-left:2px}
.ruler .last{flex:0 0 16px;padding-left:1px}
.track{height:19px;background:#fff;border-bottom:1px solid #e6e6e6;display:flex}
.track.second{background:#fafafa}
.clip{width:150px;display:flex;align-items:center;gap:3px;padding-left:8px;font-size:10px;color:#000;border:1px solid #fff;white-space:nowrap}
.clip svg{width:14px}
.green{background:#b8dc84}.lilac{background:#d9d8e8}
.clip em{width:8px;height:9px;margin:0 3px 0 auto;background:linear-gradient(90deg,#444 3px,transparent 3px 5px,#444 5px)}
.track small{color:red;font-size:9px;line-height:12px;padding-left:2px}
.line-start{position:absolute;left:2px;top:0;width:1px;height:130px;background:#f36b6b}
.line-start::before{content:"";position:absolute;left:0;top:0;width:5px;height:16px;background:#f36363}
.line-end{position:absolute;left:153px;top:0;width:1px;height:100%;background:red}
.tl-body .vbar{grid-row:2;grid-column:3}
.tl-foot{grid-row:3;grid-column:2/4;display:flex;align-items:center;border-top:1px solid #999;background:#e6e6e6;margin-right:15px;height:15px;padding-left:4px}
.tl-foot span{display:flex;align-items:center;gap:7px;flex:none;font-size:10px}
.tl-foot>span{width:49px;fill:#333}
.tl-foot .wide{gap:4px}
.tl-foot input{appearance:none;width:90px;height:12px;margin:0 5px 0 7px;flex:none;background:linear-gradient(#777,#777) 0 6px/100% 1px no-repeat,linear-gradient(#aaa,#aaa) 0 7px/100% 2px no-repeat,linear-gradient(#777,#777) 0 9px/100% 1px no-repeat}
.tl-foot input::-webkit-slider-thumb{appearance:none;width:9px;height:11px;background:#888;clip-path:polygon(50% 0,100% 50%,100% 100%,0 100%,0 50%)}
.tl-scroll{flex:1;height:15px;display:flex;border:1px solid #666;background:#bbb}
.tl-scroll button{width:18px}
.tl-scroll span{flex:1;background:#d6d6d6;border:1px solid #555}

/* Properties */
.props{display:flex;flex-direction:column;min-width:0}
.item{padding:12px 18px 0 17px;height:98px;border-bottom:1px solid #888;margin-right:5px}
.item-top{display:flex;align-items:center;height:20px}
.item-top span{padding-left:14px}
.btn{border:1px solid #666;background:linear-gradient(#eee,#ccc)}
.item-top .btn{margin-left:auto;width:92px;height:18px}
.item-name{display:flex;align-items:center;justify-content:flex-end;gap:1px;margin-top:13px}
.item-name label{flex:1;text-align:right}
.item-name input{width:232px;height:18px;border:1px solid #555;background:#f0f0f0;padding-left:4px;color:#000}
.check{display:flex;align-items:center;gap:4px}
.check input{appearance:none;width:12px;height:12px;flex:none;border:1px solid #555;background:linear-gradient(#e8e8e8,#ccc);position:relative}
.check input:checked::after{content:"";position:absolute;left:1px;top:-1px;width:10px;height:10px;background:#222;clip-path:polygon(0 45%,22% 42%,40% 65%,85% 0,100% 0,48% 95%,33% 95%)}
.check.off{color:#999}.check.off input{border-color:#999}.check.off input:checked::after{background:#999}
.vis{padding-left:72px;margin-top:4px}
.groups{flex:1;display:flex;padding:1px 3px 3px 6px}
.acc{flex:1;padding-top:2px}
.groups .vbar{width:13px;flex:none}
.acc-head{position:relative;height:18px;margin-bottom:1px;display:flex;align-items:center;padding:0 6px 0 4px;font-size:10px;border:1px solid #777;border-right:0;background:linear-gradient(#fff 1px,#dadada 1px,#bcbcbc)}
.acc-head.shut{margin:0}
.acc-head span{padding-left:11px;flex:1}
.acc-head .tri{border-width:6px 4px 0}
.acc-head .tri.right{border-width:4px 0 4px 6px;margin:0 1px}
.mark{position:absolute;left:-7px;top:-9px;width:76px;height:35px;border:5px solid #ed1c24;z-index:4}
.acc-body{background:#e6e6e6;border-left:1px solid #888;display:grid;grid-template-columns:84px 1fr;column-gap:2px;align-items:center;padding:6px 9px 10px 0}
.acc-body>label:not(.check),.lab{text-align:right}
.action{grid-template-rows:26px 25px 26px 25px 28px;padding-top:5px}
.options{grid-template-rows:22px 22px 6px;grid-auto-rows:22px}
.options hr{grid-column:1/3;margin:3px 0 2px 9px;border:0;border-top:1px solid #999;align-self:start;justify-self:stretch;height:1px}
.row{display:flex;align-items:center}
.num{color:#8888a0;border-bottom:1px dotted #888;line-height:13px;margin-left:1px;margin-right:43px}
.caps{padding-left:2px;gap:8px}
.select{position:relative;display:flex;height:18px;border:1px solid #555;background:linear-gradient(#e2e2e2,#c6c6c6)}
.select select{appearance:none;flex:1;padding-left:6px}
.select::before{content:"";position:absolute;right:17px;top:3px;bottom:3px;width:1px;background:#999}
.select::after{content:"";position:absolute;right:5px;top:6px;border:4px solid transparent;border-top:5px solid #111;border-bottom:0}
.select.off{border-color:#999;color:#999;background:#d3d3d3}.select.off select{opacity:1}.select.off::after{border-top-color:#999}
.sc{gap:5px}
.sc input{flex:1;height:18px;border:2px solid #555;background:#f0f0f0}
.sc .btn{width:22px;height:18px;border-color:#aaa;color:#999}

/* Status bar and taskbar */
.status{height:25px;display:flex;align-items:center;padding-left:6px;border-bottom:1px solid #eee}
.cell{border-left:1px solid #999;height:20px;display:flex;align-items:center}
.view{margin-left:auto;width:101px;padding-left:11px}
.size{width:128px;padding-left:7px}
.taskbar{height:29px;display:flex;background:linear-gradient(#383838,#181818 4px,#111);padding-left:8px}
.taskbar button{width:46px;height:28px}
.taskbar .orb{width:38px;height:36px;margin:-7px 12px 0 0;position:relative}
.taskbar .run{width:42px;margin:1px 2px 0;border:1px solid #888;border-radius:3px;background:linear-gradient(150deg,#777,#333 45%,#161616)}
.taskbar .run.current{background:linear-gradient(150deg,#ddd,#999 45%,#777)}
.cp{width:17px;height:16px;background:#3f8454;color:#c5edc9;font-size:10px;line-height:15px}
.word{width:16px;height:16px;background:#eaf2fc;border:1px solid #6190c9;color:#1d57a8;font-weight:700;line-height:14px}
.tray{margin-left:auto;display:flex;align-items:center;color:#eee;font-size:12px;gap:12px}
.tray .lang{padding:0 2px 6px 0}
.tray time{padding:0 0 0 5px}
.taskbar .desktop{width:12px;height:29px;border:1px solid #666;background:linear-gradient(#555,#222)}
.mark-tools{position:absolute;left:1px;top:87px;width:39px;height:568px;border:5px solid #ed1c24;pointer-events:none}
```
